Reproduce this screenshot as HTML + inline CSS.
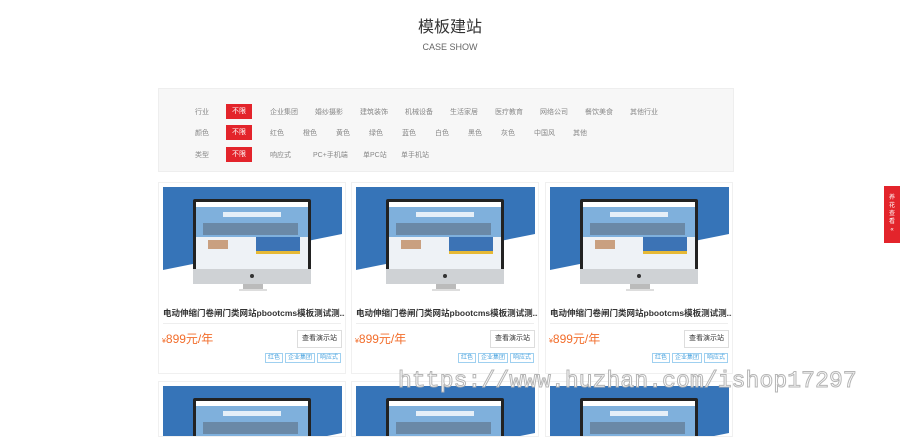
<!DOCTYPE html>
<html><head><meta charset="utf-8"><style>
*{margin:0;padding:0;box-sizing:border-box}
html,body{width:900px;height:437px;overflow:hidden}
body{background:#fff;font-family:"Liberation Sans","Noto Sans CJK SC",sans-serif;position:relative}
.t1{position:absolute;top:13px;width:100%;text-align:center;font-size:16px;color:#333}
.t2{position:absolute;top:42px;width:100%;text-align:center;font-size:9px;color:#666}
.filter{position:absolute;left:158px;top:88px;width:576px;height:84px;background:#f7f7f7;border:1px solid #eee}
.row{position:absolute;left:36px;font-size:7px;color:#888;display:flex;align-items:center}
.row .lab{width:31px}
.row .on{background:#e3242b;color:#fff;width:26px;height:15px;line-height:15px;text-align:center;margin-right:18px}
.row i{font-style:normal;display:inline-block}
.card{position:absolute;width:188px;height:192px;border:1px solid #f0f0f0;background:#fff;overflow:hidden}
.img{position:absolute;left:4px;top:4px;width:179px;height:104px;overflow:hidden;background:#fff}
.ttl{position:absolute;left:4px;top:124px;font-size:8.5px;font-weight:bold;color:#333;white-space:nowrap}
.hr{position:absolute;left:4px;right:4px;top:140px;border-top:1px solid #eee}
.pr{position:absolute;left:3px;top:147px;color:#f26d2b;font-size:12px}
.pr small{font-size:7px}
.btn{position:absolute;left:138px;top:147px;width:45px;height:18px;border:1px solid #ddd;font-size:7px;line-height:16px;text-align:center;color:#333}
.tags{position:absolute;right:4px;top:170px;display:flex;gap:2px}
.tags b{font-weight:normal;font-size:6px;color:#4aa3df;border:1px solid #9fd0f0;padding:0 2px;height:10px;line-height:9px}
.side{position:absolute;left:884px;top:186px;width:16px;height:57px;background:#e3242b;color:#fff;font-size:6px;text-align:center;line-height:8px;padding-top:8px}
.wm{position:absolute;left:398px;top:368px;font-family:"Liberation Mono",monospace;font-size:23px;color:#fff;-webkit-text-stroke:1px #b5b5b5;letter-spacing:0.1px;white-space:nowrap}
</style></head><body>
<div class="t1">模板建站</div>
<div class="t2">CASE SHOW</div>
<div class="filter">
<div class="row" style="top:15px"><span class="lab">行业</span><span class="on">不限</span><i style="width:45px">企业集团</i><i style="width:45px">婚纱摄影</i><i style="width:45px">建筑装饰</i><i style="width:45px">机械设备</i><i style="width:45px">生活家居</i><i style="width:45px">医疗教育</i><i style="width:45px">网络公司</i><i style="width:45px">餐饮美食</i><i>其他行业</i></div>
<div class="row" style="top:36px"><span class="lab">颜色</span><span class="on">不限</span><i style="width:33px">红色</i><i style="width:33px">橙色</i><i style="width:33px">黄色</i><i style="width:33px">绿色</i><i style="width:33px">蓝色</i><i style="width:33px">白色</i><i style="width:33px">黑色</i><i style="width:33px">灰色</i><i style="width:39px">中国风</i><i>其他</i></div>
<div class="row" style="top:58px"><span class="lab">类型</span><span class="on">不限</span><i style="width:43px">响应式</i><i style="width:50px">PC+手机端</i><i style="width:38px">单PC站</i><i>单手机站</i></div>
</div>

<svg width="0" height="0" style="position:absolute"><defs>
<g id="mon">
<rect width="179" height="104" fill="#fff"/>
<polygon points="0,0 179,0 179,47 0,83" fill="#3674b8"/>
<rect x="30" y="12" width="118" height="72" rx="2" fill="#222"/>
<rect x="33" y="15" width="112" height="67" fill="#eef2f6"/>
<rect x="33" y="15" width="112" height="5" fill="#fff"/>
<rect x="33" y="20" width="112" height="30" fill="#7fb0dc"/>
<rect x="60" y="25" width="58" height="5" fill="#fff" opacity=".8"/>
<rect x="40" y="36" width="95" height="12" fill="#5b6f84" opacity=".6"/>
<rect x="93" y="50" width="44" height="14" fill="#3c73b5"/>
<rect x="93" y="64" width="44" height="3" fill="#e6b935"/>
<rect x="45" y="53" width="20" height="9" fill="#c9a080"/>
<rect x="30" y="82" width="118" height="15" fill="#cfd2d5"/>
<circle cx="89" cy="89" r="2" fill="#333"/>
<rect x="80" y="97" width="20" height="6" fill="#bbb"/>
<rect x="76" y="102" width="28" height="2" fill="#ddd"/>
</g></defs></svg>

<div class="card" style="left:158px;top:182px"><svg class="img" viewBox="0 0 179 104"><use href="#mon"/></svg><div class="ttl">电动伸缩门卷闸门类网站pbootcms模板测试测...</div><div class="hr"></div><div class="pr"><small>¥</small>899元/年</div><div class="btn">查看演示站</div><div class="tags"><b>红色</b><b>企业集团</b><b>响应式</b></div></div>
<div class="card" style="left:351px;top:182px"><svg class="img" viewBox="0 0 179 104"><use href="#mon"/></svg><div class="ttl">电动伸缩门卷闸门类网站pbootcms模板测试测...</div><div class="hr"></div><div class="pr"><small>¥</small>899元/年</div><div class="btn">查看演示站</div><div class="tags"><b>红色</b><b>企业集团</b><b>响应式</b></div></div>
<div class="card" style="left:545px;top:182px"><svg class="img" viewBox="0 0 179 104"><use href="#mon"/></svg><div class="ttl">电动伸缩门卷闸门类网站pbootcms模板测试测...</div><div class="hr"></div><div class="pr"><small>¥</small>899元/年</div><div class="btn">查看演示站</div><div class="tags"><b>红色</b><b>企业集团</b><b>响应式</b></div></div>
<div class="card" style="left:158px;top:381px;height:56px"><svg class="img" viewBox="0 0 179 104"><use href="#mon"/></svg></div>
<div class="card" style="left:351px;top:381px;height:56px"><svg class="img" viewBox="0 0 179 104"><use href="#mon"/></svg></div>
<div class="card" style="left:545px;top:381px;height:56px"><svg class="img" viewBox="0 0 179 104"><use href="#mon"/></svg></div>
<div class="side">养<br>花<br>查<br>看<br>«</div>
<div class="wm">https://www.huzhan.com/ishop17297</div>
</body></html>
